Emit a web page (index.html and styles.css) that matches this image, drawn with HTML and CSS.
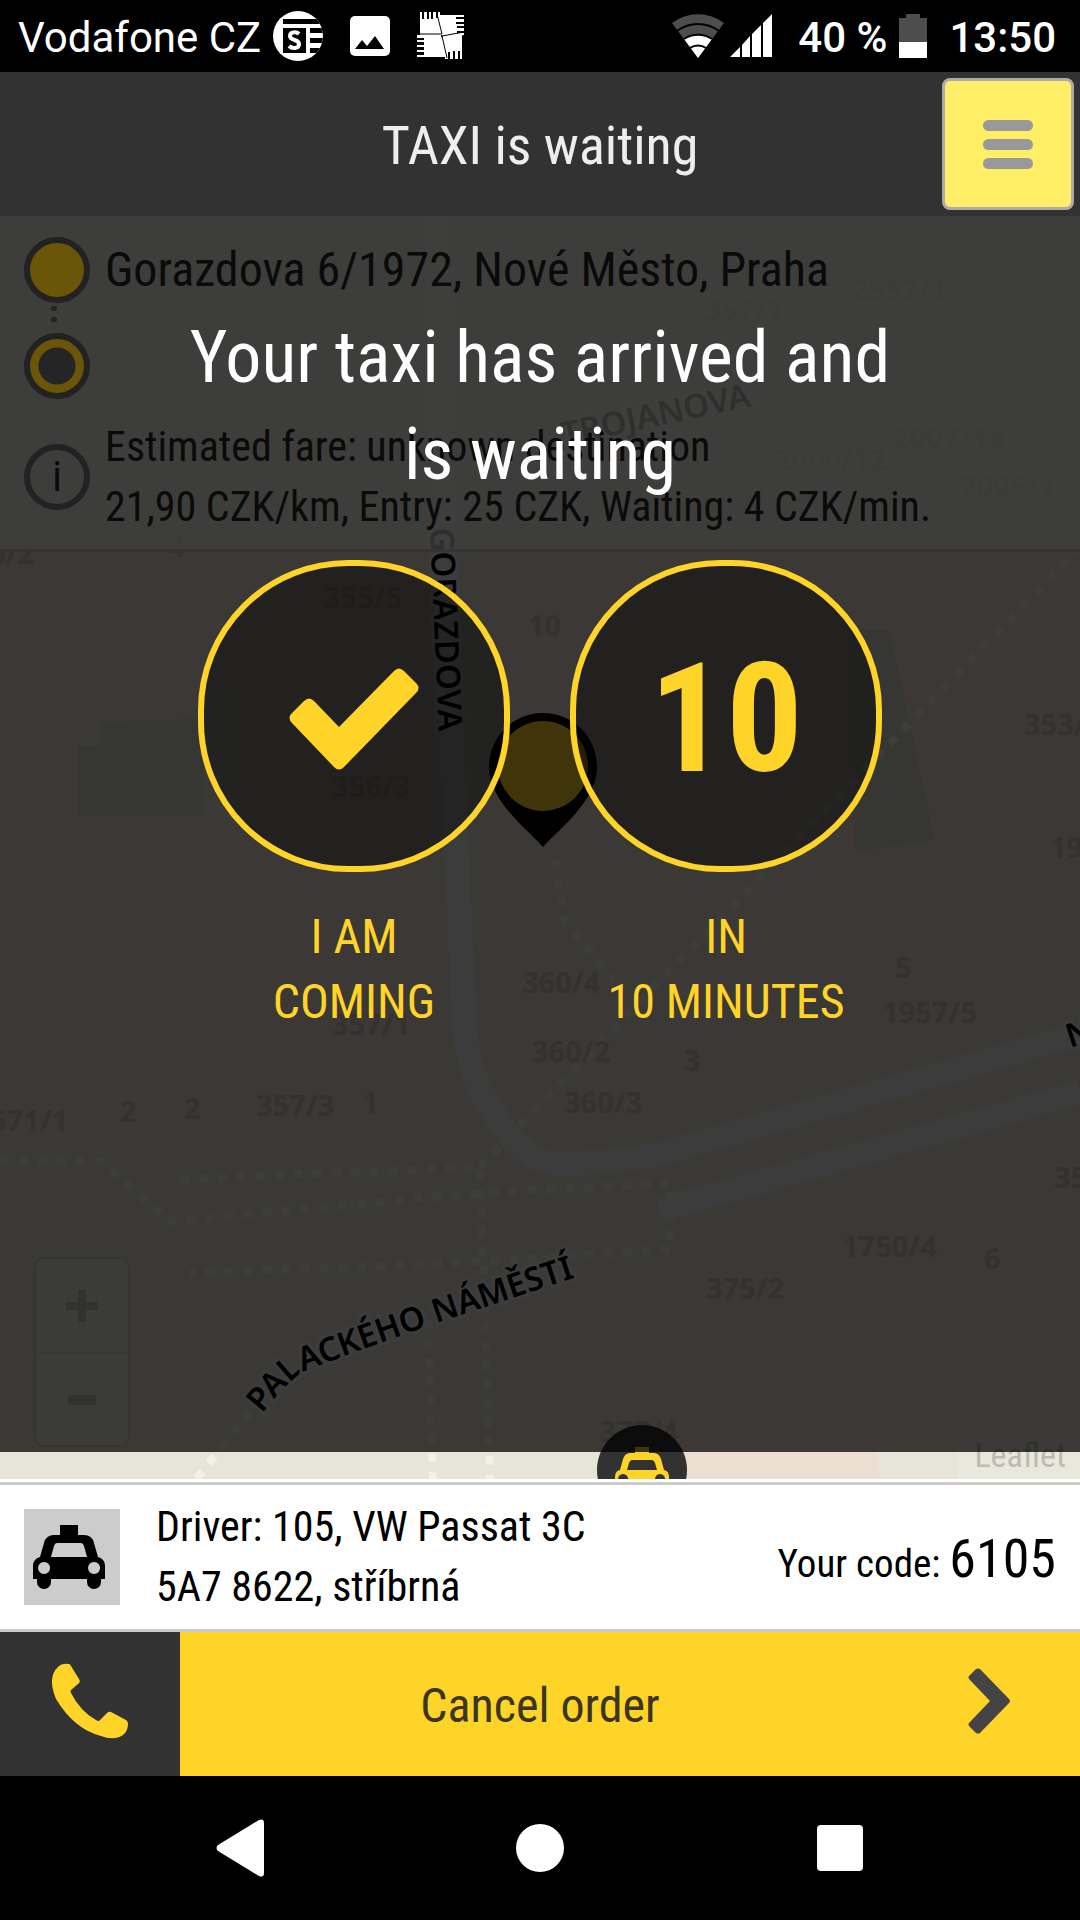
FILE: index.html
```html
<!DOCTYPE html>
<html lang="en">
<head>
<meta charset="utf-8">
<meta name="viewport" content="width=device-width, initial-scale=1">
<title>TAXI is waiting</title>
<link rel="stylesheet" href="styles.css">
</head>
<body>
<div class="status">
  <span class="carrier">Vodafone CZ</span>
  <svg class="note-icon" width="50" height="50" viewBox="0 0 50 50" aria-hidden="true">
    <clipPath id="disc"><circle cx="25" cy="25" r="25"/></clipPath>
    <g clip-path="url(#disc)">
      <rect width="50" height="50" fill="#fff"/>
      <path d="M10 8h40v5H10zM10 17h23v25H10zM37 17h13v5H37zM37 27h13v5H37zM37 37h13v5H37z" fill="#000"/>
    </g>
    <path d="M26 23c-2-2-9-3-9 2 0 5 9 3 9 8 0 5-7 5-10 2" fill="none" stroke="#fff" stroke-width="4"/>
  </svg>
  <svg class="note-icon" width="40" height="40" viewBox="0 0 40 40" aria-hidden="true">
    <rect width="40" height="40" rx="5" fill="#fff"/>
    <path d="M5 33l7-9 5 6 8-10 9 13z" fill="#000"/>
  </svg>
  <svg class="note-icon" width="48" height="50" viewBox="0 0 48 50" aria-hidden="true">
    <path d="M3 1h2v7h2V1h3v7h2V1h2v7h2V1h3v6h2V1h2v4h3l4 19H3zM21 4h26v2h-8v2h8v3h-8v2h8v2h-7v2h7v3h-7v2h7v2l-21 4zM45 22v26h-2v-8h-2v8h-3v-8h-2v8h-3v-7h-2v7h-3v-4h-2l-3-17zM0 24h24l5 22H0v-2h7v-3H0v-2h7v-3H0v-2h7v-3H0v-2h7v-2H0z" fill="#fff"/>
    <path d="M0 23h25L20 3M25 25l22-4M25 25l5 22" fill="none" stroke="#000" stroke-width="1"/>
  </svg>
  <span class="spacer"></span>
  <svg width="52" height="44" viewBox="0 0 52 44" aria-hidden="true">
    <path d="M0 9a43 43 0 0 1 52 0L26 44z" fill="#4d4d4d"/>
    <path d="M12 25a26 26 0 0 1 28 0L26 44z" fill="#fff"/>
    <path d="M5 17a35 35 0 0 1 42 0M12 25a25 25 0 0 1 28 0M18 34a14 14 0 0 1 16 0" fill="none" stroke="#000" stroke-width="2"/>
  </svg>
  <svg class="signal" width="42" height="44" viewBox="0 0 42 44" aria-hidden="true">
    <path d="M0 43l10-10v10zM12 43V31l8-9v21zM22 43V20l9-9v32zM33 43V9l9-9v43z" fill="#fff"/>
  </svg>
  <span class="status-text">40 %</span>
  <svg class="battery" width="28" height="44" viewBox="0 0 28 44" aria-hidden="true">
    <path d="M0 4h7V0h14v4h7v24H0z" fill="#4d4d4d"/><path d="M0 28h28v16H0z" fill="#fff"/>
  </svg>
  <span class="status-text">13:50</span>
</div>

<header class="header">
  <h1 class="title">TAXI is waiting</h1>
  <button class="menu" type="button" aria-label="Menu">
    <span class="bar"></span><span class="bar"></span><span class="bar"></span>
  </button>
</header>

<main class="stage">
  <div class="map">
    <svg class="map-canvas" viewBox="0 216 1080 1263" preserveAspectRatio="xMidYMid slice" aria-hidden="true">
      <rect y="216" width="1080" height="1263" fill="#e7e4d8"/>
      <g fill="#ecdfd2">
        <path d="M0 216h420l14 440-8 440-90 20H0zM0 1000h420v110L0 1150z"/>
        <path d="M500 216h580v760l-440 140-130 20-30-90z"/>
        <path d="M640 1310l310-110 130-40v60L880 1479H620z"/>
      </g>
      <path d="M60 700h180v300H60zM510 840h120l60 220-130 60zM860 1300l220-100v279H880z" fill="#e7e4d8"/>
      <path d="M100 722l104-4v98H78v-70h22zM850 630h40l45 210-80 12z" fill="#d6dcc8"/>
      <g fill="none" stroke="#eeefee" stroke-width="24">
        <path d="M436 216l10 400 18 400q2 60 32 100 26 46 64 48 40 0 100-10l420-120"/>
        <path d="M660 1210l420-118"/>
      </g>
      <g fill="none" stroke="#f3f1e8" stroke-width="8" stroke-dasharray="9 10">
        <path d="M0 1161h100l70 60 310-28 190-10v66l-170 12-310 12"/>
        <path d="M180 1179l300-12 10 312M428 1320l5 159M250 1412l-80 100M480 1167l600-620M556 860l8 60 50 60"/>
      </g>
      <g class="plot">
        <text x="-44" y="564">356/2</text><text x="168" y="557">4</text>
        <text x="324" y="608">355/5</text><text x="528" y="636">10</text>
        <text x="332" y="797">356/3</text><text x="1024" y="735">353/6</text>
        <text x="1050" y="858">1957</text><text x="522" y="993">360/4</text>
        <text x="895" y="978">5</text><text x="882" y="1023">1957/5</text>
        <text x="332" y="1035">357/1</text><text x="532" y="1062">360/2</text>
        <text x="684" y="1071">3</text><text x="564" y="1113">360/3</text>
        <text x="-10" y="1131">571/1</text><text x="120" y="1122">2</text>
        <text x="184" y="1119">2</text><text x="256" y="1116">357/3</text>
        <text x="362" y="1113">1</text><text x="1054" y="1188">354</text>
        <text x="842" y="1257">1750/4</text><text x="984" y="1269">6</text>
        <text x="706" y="1299">375/2</text><text x="600" y="1442">377/4</text>
        <text x="705" y="320">357/1</text><text x="852" y="300">2957/1</text>
        <text x="775" y="470">2000/12</text><text x="893" y="448">2007/14</text><text x="960" y="497">2005/1</text>
      </g>
      <g class="street">
        <path id="gorazdova" d="M430 528L440 760" fill="none"/>
        <text><textPath href="#gorazdova">GORAZDOVA</textPath></text>
        <path id="trojanova" d="M564 446L780 400" fill="none"/>
        <text><textPath href="#trojanova">TROJANOVA</textPath></text>
        <path id="palackeho" d="M262 1414Q284 1386 302 1372Q370 1346 440 1322L640 1256" fill="none"/>
        <text><textPath href="#palackeho">PALACKÉHO NÁMĚSTÍ</textPath></text>
        <text transform="translate(1070 1048) rotate(-18)">N</text>
      </g>
      <path d="M543 713a54 54 0 0 1 54 54c0 34-38 62-54 80-16-18-54-46-54-80a54 54 0 0 1 54-54z" fill="#000"/>
      <circle cx="543" cy="766" r="45" fill="#ffd428"/>
      <circle cx="642" cy="1470" r="45" fill="#323232"/>
      <path fill="#ffd428" fill-rule="evenodd" d="M635 1447h14v6h5q5 0 7 6l3 11q5 1 5 7v14h-54v-14q0-6 5-7l3-11q2-6 7-6h5zM632 1460h20q2 0 3 3l2 7h-30l2-7q1-3 3-3zM623 1474a5 5 0 1 0 .1 0zM660 1474a5 5 0 1 0 .1 0z"/>
    </svg>
    <div class="zoom">
      <button class="zoom-btn" type="button" aria-label="Zoom in"><svg width="32" height="32" viewBox="0 0 32 32"><path d="M12 0h8v12h12v8H20v12h-8V20H0v-8h12z" fill="currentColor"/></svg></button>
      <button class="zoom-btn" type="button" aria-label="Zoom out"><svg width="28" height="32" viewBox="0 0 28 32"><rect y="11" width="28" height="10" rx="2" fill="currentColor"/></svg></button>
    </div>
    <a class="credit" href="#">Leaflet</a>
  </div>
  <div class="scrim"></div>

  <section class="trip">
    <div class="row">
      <span class="dot from"></span>
      <span class="address">Gorazdova 6/1972, Nové Město, Praha</span>
    </div>
    <div class="row"><span class="dot to"></span></div>
    <div class="row fare-row">
      <span class="dot info">i</span>
      <p class="fare">Estimated fare: unknown destination<br>21,90 CZK/km, Entry: 25 CZK, Waiting: 4 CZK/min.</p>
    </div>
  </section>

  <section class="dialog">
    <h2 class="message">Your taxi has arrived and is waiting</h2>
    <div class="choices">
      <button class="choice" type="button">
        <span class="ring"><svg width="130" height="102" viewBox="0 0 130 102" aria-hidden="true"><path d="M3 55q-5-5 0-10l12-12q5-5 10 0l25 26L105 3q5-5 10 0l12 12q5 5 0 10L55 99q-5 5-10 0z" fill="#ffd428"/></svg></span>
        <span class="label">I AM<br>COMING</span>
      </button>
      <button class="choice" type="button">
        <span class="ring">10</span>
        <span class="label">IN<br>10 MINUTES</span>
      </button>
    </div>
  </section>
</main>

<section class="driver">
  <span class="car"><svg width="72" height="64" viewBox="0 0 72 64" aria-hidden="true"><path fill="#000" fill-rule="evenodd" d="M27 0h18v10h6q8 0 10 8l4 14q7 2 7 9v13h-4v3a7 7 0 0 1-14 0v-3H18v3a7 7 0 0 1-14 0v-3H0V41q0-7 7-9l4-14q2-8 10-8h6zM24 18q-2 0-3 3l-3 11h36l-3-11q-1-3-3-3zM11 37a6 6 0 1 0 .1 0zM61 37a6 6 0 1 0 .1 0z"/></svg></span>
  <p class="details">Driver: 105, VW Passat 3C<br>5A7 8622, stříbrná</p>
  <p class="code">Your code: <strong class="code-number">6105</strong></p>
</section>

<div class="actions">
  <button class="call" type="button" aria-label="Call driver">
    <svg width="76" height="76" viewBox="0 0 76 76" aria-hidden="true"><path d="M6 4Q10 0 17 1q1 0 2 2l8 13q2 3-1 5l-7 6q-1 1 0 3 9 18 25 27 3 2 4 0l7-7q2-2 4-1l15 8q2 1 2 4 0 7-5 11-9 6-22 1Q22 66 4 36-5 14 6 4z" fill="#ffd428"/></svg>
  </button>
  <button class="cancel" type="button">
    <span class="cancel-text">Cancel order</span>
    <svg class="chevron" width="42" height="66" viewBox="0 0 42 66" aria-hidden="true"><path d="M1 11q-1-2 0-3l7-7q2-1 4 0l29 30q2 2 0 4L12 65q-2 1-4 0l-7-7q-1-2 0-3l21-22z" fill="#444"/></svg>
  </button>
</div>

<nav class="nav">
  <button class="nav-btn" type="button" aria-label="Back"><svg width="48" height="58" viewBox="0 0 48 58"><path d="M43 1q5-2 5 3v50q0 5-5 3L2 32q-3-3 0-6z" fill="#fff"/></svg></button>
  <button class="nav-btn" type="button" aria-label="Home"><svg width="48" height="48" viewBox="0 0 48 48"><circle cx="24" cy="24" r="24" fill="#fff"/></svg></button>
  <button class="nav-btn" type="button" aria-label="Recent apps"><svg width="46" height="46" viewBox="0 0 46 46"><rect width="46" height="46" rx="4" fill="#fff"/></svg></button>
</nav>
</body>
</html>
```
FILE: styles.css
```css
* { box-sizing: border-box; }

body {
  margin: 0;
  min-height: 100vh;
  display: flex;
  flex-direction: column;
  background: #000;
  font-family: "Roboto Condensed", Roboto, sans-serif;
  font-size: 42px;
  line-height: 60px;
}

h1, h2, p { margin: 0; font-weight: 400; }

button {
  margin: 0;
  padding: 0;
  border: 0;
  background: none;
  color: inherit;
  font: inherit;
  cursor: pointer;
}

svg { display: block; flex: none; }

/* Status bar */
.status {
  display: flex;
  align-items: center;
  height: 72px;
  padding: 0 24px 0 18px;
  color: #fff;
  font-family: Roboto, sans-serif;
}
.carrier { margin-right: 12px; padding-top: 4px; }
.status-text { padding-top: 4px; font-weight: 500; }
.note-icon + .note-icon { margin-left: 27px; }
.spacer { flex: 1; }
.signal { margin: 0 26px 0 6px; }
.battery { margin: 0 22px 0 12px; }

/* Header */
.header {
  display: grid;
  grid-template-columns: 132px 1fr 132px;
  align-items: center;
  height: 144px;
  padding: 0 6px;
  background: #323232;
  color: #eee;
}
.title { grid-column: 2; padding-top: 4px; font-size: 54px; text-align: center; }
.menu {
  display: flex;
  flex-direction: column;
  align-items: center;
  justify-content: center;
  gap: 8px;
  height: 132px;
  border: 3px solid #aaa;
  border-radius: 8px;
  background: #ffee66;
}
.bar { width: 50px; height: 11px; border-radius: 6px; background: #999; }

/* Map with everything stacked on it */
.stage { flex: 1; display: grid; position: relative; overflow: hidden; }
.map, .trip, .dialog { grid-area: 1 / 1; }
.map { position: absolute; inset: 0; }
.map-canvas { width: 100%; height: 100%; }
.plot { font: 700 29px "Noto Sans", sans-serif; fill: #cdc1b6; }
.street {
  font: 600 33px "Noto Sans", sans-serif;
  fill: #000;
}
.street text { stroke: #f0f0ee; stroke-width: 6px; paint-order: stroke; }
.zoom {
  position: absolute;
  left: 36px;
  bottom: 34px;
  width: 92px;
  border-radius: 8px;
  background: #ecece8;
  box-shadow: 0 0 4px #aaa;
  color: #c8c8c4;
}
.zoom-btn {
  display: flex;
  align-items: center;
  justify-content: center;
  width: 100%;
  height: 93px;
}
.zoom-btn + .zoom-btn { border-top: 2px solid #ddd; }
.credit {
  position: absolute;
  right: 0;
  bottom: 0;
  padding: 0 14px 0 16px;
  background: #e9e8dd;
  color: #bcbbb1;
  font-size: 34px;
  line-height: 48px;
  text-decoration: none;
}
.scrim { position: absolute; inset: 0 0 27px; background: rgba(0, 0, 0, 0.75); }

/* Trip summary */
.trip {
  position: relative;
  align-self: start;
  padding: 21px 24px 12px;
  border-bottom: 3px solid #353433;
  background: rgba(63, 63, 62, 0.75);
  color: #0a0a0a;
}
.row { display: flex; align-items: center; gap: 15px; }
.row + .row { margin-top: 30px; }
.row + .fare-row { margin-top: 18px; }
.address { font-size: 48px; }
.dot {
  position: relative;
  flex: none;
  width: 66px;
  height: 66px;
  border: 6px solid #222;
  border-radius: 50%;
  text-align: center;
  line-height: 54px;
}
.from { background: #6a5508; }
.from::after {
  content: "";
  position: absolute;
  left: 21px;
  top: 60px;
  width: 6px;
  height: 24px;
  background: radial-gradient(circle, #232323 3px, transparent 3px) 0 0 / 6px 11px;
}
.to { background: radial-gradient(circle, #252525 18px, #6a5508 19px); }

/* Arrival dialog */
.dialog {
  position: relative;
  display: flex;
  flex-direction: column;
  align-items: center;
  padding-top: 93px;
}
.message {
  max-width: 760px;
  color: #fff;
  font-size: 72px;
  line-height: 97px;
  text-align: center;
}
.choices { display: flex; gap: 60px; margin-top: 57px; }
.choice { display: flex; flex-direction: column; align-items: center; gap: 32px; width: 312px; }
.ring {
  display: flex;
  align-items: center;
  justify-content: center;
  width: 312px;
  height: 312px;
  padding-top: 6px;
  border: 6px solid #ffd428;
  border-radius: 150px;
  background: rgba(0, 0, 0, 0.4);
  color: #ffd428;
  font-size: 152px;
  font-weight: 700;
}
.label { color: #ffd428; font-size: 48px; line-height: 65px; }

/* Driver */
.driver {
  display: flex;
  align-items: center;
  height: 153px;
  padding: 3px 24px 0;
  border-top: 3px solid #fff;
  border-bottom: 3px solid #ccc;
  background: #fff;
  box-shadow: inset 0 3px #ccc;
  color: #000;
}
.car {
  display: flex;
  align-items: center;
  width: 96px;
  height: 96px;
  margin-right: 36px;
  padding-left: 9px;
  background: #ccc;
}
.details { flex: 1; }
.code { padding-top: 8px; font-size: 39px; }
.code-number { font-size: 54px; font-weight: 400; }

/* Actions */
.actions { display: flex; height: 144px; }
.call {
  display: flex;
  align-items: center;
  justify-content: center;
  width: 180px;
  padding-bottom: 6px;
  background: #323232;
}
.cancel {
  flex: 1;
  display: flex;
  align-items: center;
  padding-right: 70px;
  background: #ffd428;
  color: #3a3524;
  font-size: 48px;
}
.cancel-text { flex: 1; padding: 4px 68px 0 0; }
.chevron { margin-bottom: 6px; }

/* System navigation */
.nav {
  display: flex;
  justify-content: center;
  gap: 160px;
  height: 144px;
}
.nav-btn { display: flex; align-items: center; justify-content: center; width: 140px; }
```
